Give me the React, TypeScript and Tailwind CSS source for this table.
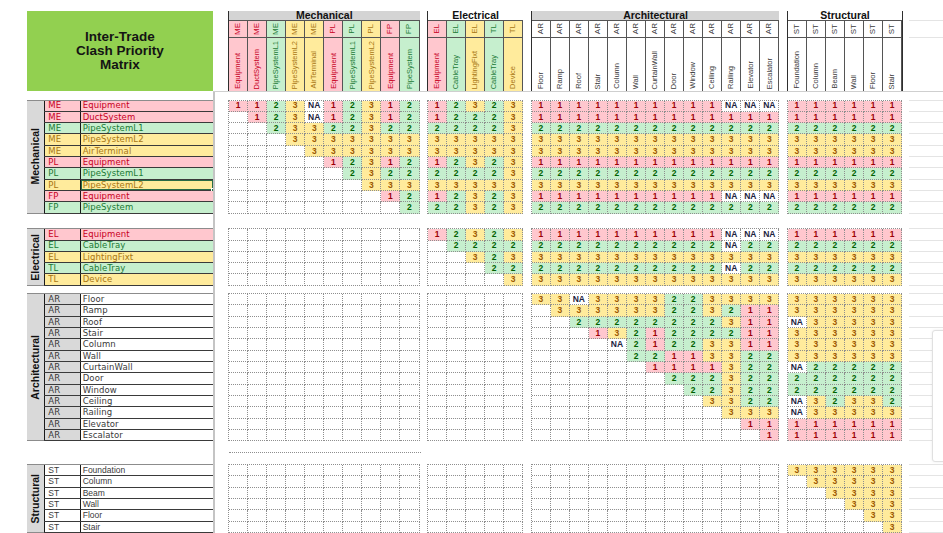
import React from 'react';

type Col = [string, string, string];

const MECH_COLS: Col[] = [
  ['ME', 'Equipment', 'r'], ['ME', 'DuctSystem', 'r'], ['ME', 'PipeSystemL1', 'g'], ['ME', 'PipeSystemL2', 'y'],
  ['ME', 'AirTerminal', 'y'], ['PL', 'Equipment', 'r'], ['PL', 'PipeSystemL1', 'g'], ['PL', 'PipeSystemL2', 'y'],
  ['FP', 'Equipment', 'r'], ['FP', 'PipeSystem', 'g'],
];
const ELEC_COLS: Col[] = [
  ['EL', 'Equipment', 'r'], ['EL', 'CableTray', 'g'], ['EL', 'LightingFixt', 'y'], ['TL', 'CableTray', 'g'], ['TL', 'Device', 'y'],
];
const ARCH_COLS: Col[] = ['Floor', 'Ramp', 'Roof', 'Stair', 'Column', 'Wall', 'CurtainWall', 'Door', 'Window', 'Ceiling', 'Railing', 'Elevator', 'Escalator'].map(
  (n) => ['AR', n, 'a'] as Col
);
const STRUCT_COLS: Col[] = ['Foundation', 'Column', 'Beam', 'Wall', 'Floor', 'Stair'].map((n) => ['ST', n, 's'] as Col);

const HBG: Record<string, string> = {
  r: 'bg-[#ffc7ce]',
  g: 'bg-[#c6efce]',
  y: 'bg-[#ffeb9c]',
  a: 'bg-white',
  s: 'bg-white',
};
const HTX: Record<string, string> = {
  r: 'text-[#c8001e]',
  g: 'text-[#1b7a35]',
  y: 'text-[#a87613]',
  a: 'text-[#3a3a3a]',
  s: 'text-[#3a3a3a]',
};

const CELL: Record<string, string> = {
  '1': 'bg-[#ffc7ce] text-[#9c0006]',
  '2': 'bg-[#c6efce] text-[#006100]',
  '3': 'bg-[#ffeb9c] text-[#9c5700]',
  N: 'bg-white text-[#1c2340]',
  _: 'bg-white',
};

const rep = (c: string, n: number) => c.repeat(n);
const empty = (cols: number, rows: number) => Array.from({ length: rows }, () => rep('_', cols));

const MECH_ROWS: Col[] = [
  ['ME', 'Equipment', 'r'], ['ME', 'DuctSystem', 'r'], ['ME', 'PipeSystemL1', 'g'], ['ME', 'PipeSystemL2', 'y'],
  ['ME', 'AirTerminal', 'y'], ['PL', 'Equipment', 'r'], ['PL', 'PipeSystemL1', 'g'], ['PL', 'PipeSystemL2', 'y'],
  ['FP', 'Equipment', 'r'], ['FP', 'PipeSystem', 'g'],
];
const ELEC_ROWS: Col[] = [
  ['EL', 'Equipment', 'r'], ['EL', 'CableTray', 'g'], ['EL', 'LightingFixt', 'y'], ['TL', 'CableTray', 'g'], ['TL', 'Device', 'y'],
];
const ARCH_ROWS: Col[] = ARCH_COLS.map(([c, n]) => [c, n, 'a'] as Col);
const STRUCT_ROWS: Col[] = STRUCT_COLS.map(([c, n]) => [c, n, 's'] as Col);

const MECH_DATA = {
  mech: ['1123N12312', '_123N12312', '__23322322', '___3333333', '____333333', '_____12312', '______2322', '_______333', '________12', '_________2'],
  elec: ['12323', '12223', '22223', '33333', '33333', '12323', '22223', '33333', '12323', '22323'],
  arch: ['1111111111NNN', rep('1', 13), rep('2', 13), rep('3', 13), rep('3', 13), rep('1', 13), rep('2', 13), rep('3', 13), '1111111111NNN', rep('2', 13)],
  struct: ['111111', '111111', '222222', '333333', '333333', '111111', '222222', '333333', '111111', '222222'],
};
const ELEC_DATA = {
  mech: empty(10, 5),
  elec: ['12323', '_2222', '__323', '___22', '____3'],
  arch: ['1111111111NNN', '2222222222N22', rep('3', 13), '2222222222N22', rep('3', 13)],
  struct: ['111111', '222222', '333333', '222222', '333333'],
};
const ARCH_DATA = {
  mech: empty(10, 13),
  elec: empty(5, 13),
  arch: [
    '33N3333223333', '_333333223211', '__22222222311', '___1321222211', '____N21223311', '_____22113322', '______1111322',
    '_______222322', '________22322', '_________3322', '__________333', '___________11', '____________1',
  ],
  struct: ['333333', '333333', 'N33333', '333333', '333333', '333333', 'N22222', '222222', '222222', 'N32332', 'N33333', '111111', '111111'],
};
const STRUCT_DATA = {
  mech: empty(10, 6),
  elec: empty(5, 6),
  arch: empty(13, 6),
  struct: ['333333', '_33333', '__3333', '___333', '____33', '_____3'],
};

function Block({ rows }: { rows: string[] }) {
  return (
    <div className="flex flex-col border-t border-l border-dotted border-[#8e8e8e]">
      {rows.map((r, i) => (
        <div key={i} className="flex">
          {r.split('').map((c, j) => (
            <div
              key={j}
              className={`w-[19.05px] h-[11.34px] border-r border-b border-dotted border-[#8e8e8e] flex items-center justify-center text-[8.5px] font-bold leading-none ${CELL[c]}`}
            >
              {c === '_' ? '' : c === 'N' ? 'NA' : c}
            </div>
          ))}
        </div>
      ))}
    </div>
  );
}

function GridTail({ n }: { n: number }) {
  return (
    <div className="ml-[7px] w-[34px] flex flex-col border-t border-[#e4e4e4]">
      {Array.from({ length: n }).map((_, i) => (
        <div key={i} className="h-[11.34px] border-b border-[#e4e4e4]" />
      ))}
    </div>
  );
}

function LabelBlock({ title, rows, narrow }: { title: string; rows: Col[]; narrow?: boolean }) {
  const font = narrow
    ? "font-['Liberation_Sans',Arial,sans-serif] text-[8.5px]"
    : "font-['DejaVu_Sans',Verdana,sans-serif] text-[8.5px] tracking-[0.1px]";
  return (
    <div className="flex w-[186.3px] border-t border-[#8c8c8c]">
      <div className="w-[17.3px] bg-[#d9d9d9] flex items-center justify-center border-b border-[#8c8c8c]">
        <span className="[writing-mode:vertical-rl] rotate-180 font-bold text-[10.5px] leading-none text-[#111] font-['Liberation_Sans',Arial,sans-serif]">
          {title}
        </span>
      </div>
      <div className="flex flex-col flex-1">
        {rows.map(([code, name, k], i) => {
          const selected = title === 'Mechanical' && i === 7;
          const codeBg = k === 'a' ? 'bg-[#d9d9d9]' : HBG[k];
          return (
            <div key={i} className={`flex h-[11.34px] border-b border-[#3a3a3a] ${font}`}>
              <div className={`w-[36.4px] border-l border-r border-[#1a1a1a] pl-[3px] flex items-center leading-none ${codeBg} ${HTX[k]}`}>
                {code}
              </div>
              <div
                className={`relative flex-1 pl-[2px] flex items-center leading-none ${HBG[k]} ${HTX[k]} ${selected ? 'outline outline-[1.5px] outline-[#2a6b45] -outline-offset-1' : ''}`}
              >
                {name}
                {selected && <div className="absolute right-[-2px] bottom-[-2px] w-[4px] h-[4px] bg-[#217346] border border-white" />}
              </div>
            </div>
          );
        })}
      </div>
    </div>
  );
}

function HeaderGroup({ name, cols, gray }: { name: string; cols: Col[]; gray: boolean }) {
  return (
    <div className="flex flex-col border-l border-[#2e2e2e]">
      <div
        className={`h-[10.3px] border-b border-[#555] flex items-center justify-center font-bold text-[10.5px] leading-none text-[#111] ${gray ? 'bg-[#d4d4d4]' : 'bg-white'}`}
      >
        {name}
      </div>
      <div className="flex h-[16.4px] border-b border-[#555]">
        {cols.map(([c, , k], i) => (
          <div key={i} className={`w-[19.05px] border-r border-[#555] flex items-center justify-center ${HBG[k]} ${HTX[k]}`}>
            <span className="[writing-mode:vertical-rl] rotate-180 text-[8px] leading-none">{c}</span>
          </div>
        ))}
      </div>
      <div className="flex h-[53.3px]">
        {cols.map(([, n, k], i) => (
          <div key={i} className={`w-[19.05px] border-r border-[#555] flex items-end justify-center pb-[2px] ${HBG[k]} ${HTX[k]}`}>
            <span className="[writing-mode:vertical-rl] rotate-180 text-[7.5px] leading-none whitespace-nowrap">{n}</span>
          </div>
        ))}
      </div>
    </div>
  );
}

function Band({ title, rows, data, narrow }: { title: string; rows: Col[]; data: typeof MECH_DATA; narrow?: boolean }) {
  return (
    <div className="flex items-start pl-[27px]">
      <LabelBlock title={title} rows={rows} narrow={narrow} />
      <div className="ml-[15.4px] flex items-start gap-[7.5px]">
        <Block rows={data.mech} />
        <Block rows={data.elec} />
        <Block rows={data.arch} />
        <Block rows={data.struct} />
      </div>
      <GridTail n={rows.length} />
    </div>
  );
}

export default function App() {
  return (
    <div className="relative w-[943px] h-[533px] overflow-hidden bg-white font-['Liberation_Sans',Arial,sans-serif] text-[#111]">
      {/* header */}
      <div className="flex pl-[27px] pt-[11px] h-[91px]">
        <div className="w-[186.3px] h-[80px] bg-[#92d050] flex items-center justify-center text-center font-bold text-[13.5px] leading-[14.3px] text-[#141414]">
          Inter-Trade
          <br />
          Clash Priority
          <br />
          Matrix
        </div>
        <div className="ml-[15.4px] flex items-start gap-[7.5px]">
          <HeaderGroup name="Mechanical" cols={MECH_COLS} gray />
          <HeaderGroup name="Electrical" cols={ELEC_COLS} gray={false} />
          <HeaderGroup name="Architectural" cols={ARCH_COLS} gray />
          <div className="border-r border-[#2e2e2e]">
            <HeaderGroup name="Structural" cols={STRUCT_COLS} gray={false} />
          </div>
        </div>
        <div className="ml-[6px] w-[34px] flex flex-col">
          <div className="h-[10.3px] border-b border-[#e4e4e4]" />
          <div className="h-[16.4px] border-b border-[#e4e4e4]" />
        </div>
      </div>

      <div className="h-[8.5px]" />
      <Band title="Mechanical" rows={MECH_ROWS} data={MECH_DATA} />
      <div className="h-[14.4px]" />
      <Band title="Electrical" rows={ELEC_ROWS} data={ELEC_DATA} />
      <div className="h-[7.3px]" />
      <Band title="Architectural" rows={ARCH_ROWS} data={ARCH_DATA} />
      <div className="h-[22.6px] pl-[228.7px] pt-[10.6px]">
        <div className="w-[192px] border-t border-dotted border-[#8e8e8e]" />
      </div>
      <Band title="Structural" rows={STRUCT_ROWS} data={STRUCT_DATA} narrow />

      {/* frozen pane lines */}
      <div className="absolute left-[213px] top-[91px] w-[1.5px] h-[442px] bg-[#c4c4c4]" />
      <div className="absolute left-[213px] top-[90.6px] right-0 h-[1.2px] bg-[#cfcfcf]" />
      {/* faint side panel */}
      <div className="absolute left-[932px] top-[330px] w-[30px] h-[132px] border border-[#e0e0e0] rounded-[3px] bg-white shadow-[0_0_3px_rgba(0,0,0,0.08)]" />
    </div>
  );
}
